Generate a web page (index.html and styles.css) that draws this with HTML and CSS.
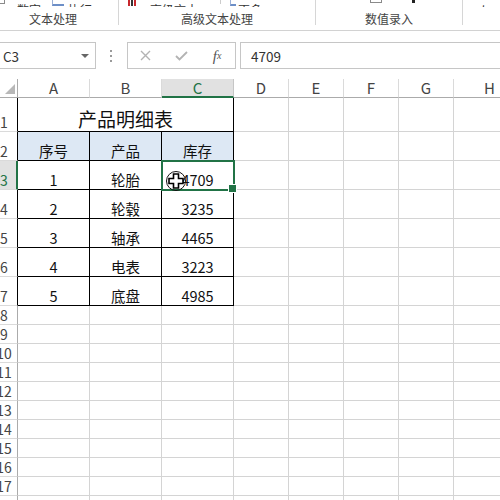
FILE: index.html
```html
<!DOCTYPE html>
<html lang="zh">
<head>
<meta charset="utf-8">
<link rel="stylesheet" href="styles.css">
</head>
<body>
<div class="ribbon">
  <div class="group g1">
    <div class="gtop">
      <span class="ico-box m7"></span>
      <span class="rt m12">数字</span>
      <span class="ico-blue m11"></span>
      <span class="rt m4">执行</span>
    </div>
    <div class="glabel">文本处理</div>
  </div>
  <div class="sep"></div>
  <div class="group g2">
    <div class="gtop">
      <span class="ico-bars m9"><i class="r"></i><i></i><i class="r"></i></span>
      <span class="rt m14">高级文本</span>
      <span class="minisep m22"></span>
      <span class="ico-blue small m9"></span>
      <span class="rt m2">更多</span>
    </div>
    <div class="glabel">高级文本处理</div>
  </div>
  <div class="sep"></div>
  <div class="group g3">
    <div class="gtop">
      <span class="ico-box wide m54"></span>
      <span class="ico-dot m30"></span>
    </div>
    <div class="glabel">数值录入</div>
  </div>
  <div class="sep"></div>
  <div class="group g4">
    <div class="gtop">
      <span class="rt big m17">如</span>
    </div>
  </div>
</div>

<div class="fbar">
  <div class="namebox"><span>C3</span><span class="dd"></span></div>
  <div class="dots"><i></i><i></i><i></i></div>
  <div class="fbtns">
    <span class="fb">
      <svg width="11" height="11" viewBox="0 0 11 11"><path d="M1 1L10 10M10 1L1 10" stroke="#b3b3b3" stroke-width="1.4" fill="none"/></svg>
    </span>
    <span class="fb">
      <svg width="13" height="10" viewBox="0 0 13 10"><path d="M1 5L4.5 8.5L12 1" stroke="#b3b3b3" stroke-width="1.8" fill="none"/></svg>
    </span>
    <span class="fb fx">f<sub>x</sub></span>
  </div>
  <div class="finput">4709</div>
</div>

<div class="sheet">
  <div class="corner"><svg width="10" height="10" viewBox="0 0 10 10"><path d="M10 0L10 10L0 10Z" fill="#b8b8b8"/></svg></div>
  <div class="ch">A</div>
  <div class="ch">B</div>
  <div class="ch csel">C</div>
  <div class="ch">D</div>
  <div class="ch">E</div>
  <div class="ch">F</div>
  <div class="ch">G</div>
  <div class="ch">H</div>

  <div class="rh rb">1</div>
  <div class="c t title">产品明细表</div>
  <div class="c"></div><div class="c"></div><div class="c"></div><div class="c"></div><div class="c"></div>

  <div class="rh rb">2</div>
  <div class="c t hd">序号</div><div class="c t hd">产品</div><div class="c t hd">库存</div>
  <div class="c"></div><div class="c"></div><div class="c"></div><div class="c"></div><div class="c"></div>

  <div class="rh rsel">3</div>
  <div class="c t">1</div><div class="c t">轮胎</div><div class="c t sel">4709</div>
  <div class="c"></div><div class="c"></div><div class="c"></div><div class="c"></div><div class="c"></div>

  <div class="rh rb">4</div>
  <div class="c t">2</div><div class="c t">轮毂</div><div class="c t">3235</div>
  <div class="c"></div><div class="c"></div><div class="c"></div><div class="c"></div><div class="c"></div>

  <div class="rh rb">5</div>
  <div class="c t">3</div><div class="c t">轴承</div><div class="c t">4465</div>
  <div class="c"></div><div class="c"></div><div class="c"></div><div class="c"></div><div class="c"></div>

  <div class="rh rb">6</div>
  <div class="c t">4</div><div class="c t">电表</div><div class="c t">3223</div>
  <div class="c"></div><div class="c"></div><div class="c"></div><div class="c"></div><div class="c"></div>

  <div class="rh rb">7</div>
  <div class="c t">5</div><div class="c t">底盘</div><div class="c t">4985</div>
  <div class="c"></div><div class="c"></div><div class="c"></div><div class="c"></div><div class="c"></div>

  <div class="rh">8</div><div class="c"></div><div class="c"></div><div class="c"></div><div class="c"></div><div class="c"></div><div class="c"></div><div class="c"></div><div class="c"></div>
  <div class="rh">9</div><div class="c"></div><div class="c"></div><div class="c"></div><div class="c"></div><div class="c"></div><div class="c"></div><div class="c"></div><div class="c"></div>
  <div class="rh">10</div><div class="c"></div><div class="c"></div><div class="c"></div><div class="c"></div><div class="c"></div><div class="c"></div><div class="c"></div><div class="c"></div>
  <div class="rh">11</div><div class="c"></div><div class="c"></div><div class="c"></div><div class="c"></div><div class="c"></div><div class="c"></div><div class="c"></div><div class="c"></div>
  <div class="rh">12</div><div class="c"></div><div class="c"></div><div class="c"></div><div class="c"></div><div class="c"></div><div class="c"></div><div class="c"></div><div class="c"></div>
  <div class="rh">13</div><div class="c"></div><div class="c"></div><div class="c"></div><div class="c"></div><div class="c"></div><div class="c"></div><div class="c"></div><div class="c"></div>
  <div class="rh">14</div><div class="c"></div><div class="c"></div><div class="c"></div><div class="c"></div><div class="c"></div><div class="c"></div><div class="c"></div><div class="c"></div>
  <div class="rh">15</div><div class="c"></div><div class="c"></div><div class="c"></div><div class="c"></div><div class="c"></div><div class="c"></div><div class="c"></div><div class="c"></div>
  <div class="rh">16</div><div class="c"></div><div class="c"></div><div class="c"></div><div class="c"></div><div class="c"></div><div class="c"></div><div class="c"></div><div class="c"></div>
  <div class="rh">17</div><div class="c"></div><div class="c"></div><div class="c"></div><div class="c"></div><div class="c"></div><div class="c"></div><div class="c"></div><div class="c"></div>
  <div class="rh">18</div><div class="c"></div><div class="c"></div><div class="c"></div><div class="c"></div><div class="c"></div><div class="c"></div><div class="c"></div><div class="c"></div>
</div>

<svg class="cursor" width="22" height="22" viewBox="0 0 22 22">
  <circle cx="11" cy="11" r="9.5" fill="none" stroke="#111" stroke-width="1"/>
  <path d="M8.5 4H13.5V8.5H18V13.5H13.5V18H8.5V13.5H4V8.5H8.5Z" fill="#fff" stroke="#000" stroke-width="1.6" stroke-linejoin="miter"/>
</svg>
</body>
</html>
```

FILE: styles.css
```css
* { box-sizing: border-box; }
html, body {
  margin: 0;
  padding: 0;
  width: 500px;
  height: 500px;
  overflow: hidden;
  background: #fff;
  font-family: "Noto Sans CJK SC", "Noto Sans", sans-serif;
  color: #222;
}

/* ribbon */
.ribbon {
  display: flex;
  height: 31px;
  border-bottom: 1px solid #d2d2d2;
  margin-left: -12px;
  width: 512px;
  overflow: hidden;
}
.group { display: flex; flex-direction: column; flex: none; }
.g1 { width: 130px; }
.g2 { width: 196px; }
.g3 { width: 146px; }
.g4 { flex: 1; }
.sep { width: 1px; height: 25px; background: #d6d6d6; flex: none; }
.gtop {
  height: 7px;
  overflow: hidden;
  display: flex;
  align-items: flex-end;
}
.gtop > * { flex: none; }
.rt {
  font-size: 12px;
  line-height: 14px;
  color: #333;
  margin-bottom: -10px;
}
.rt.big { font-size: 14px; margin-bottom: -11px; }
.glabel {
  font-size: 12px;
  line-height: 18px;
  padding-top: 3px;
  color: #444;
  text-align: center;
}
.m2 { margin-left: 2px; }
.m4 { margin-left: 4px; }
.m7 { margin-left: 7px; }
.m9 { margin-left: 9px; }
.m11 { margin-left: 11px; }
.m12 { margin-left: 12px; }
.m14 { margin-left: 14px; }
.m17 { margin-left: 17px; }
.m22 { margin-left: 22px; }
.m30 { margin-left: 30px; }
.m54 { margin-left: 54px; }
.ico-box {
  width: 10px; height: 10px;
  border: 1px solid #8a8a8a;
  margin-bottom: 3px;
}
.ico-box.wide { width: 12px; margin-bottom: 4px; }
.ico-blue {
  width: 12px; height: 8px;
  border-bottom: 2px solid #6d8fc7;
  border-left: 1px solid #9bb0d6;
  margin-bottom: 1px;
}
.ico-blue.small { width: 6px; }
.ico-bars { display: flex; gap: 1px; height: 8px; margin-bottom: 1px; }
.ico-bars i { display: block; width: 2px; height: 8px; background: #333; }
.ico-bars i.r { background: #c8282d; }
.minisep { width: 1px; height: 6px; background: #ccc; margin-bottom: 3px; }
.ico-dot { width: 3px; height: 3px; background: #222; margin-bottom: 4px; }

/* formula bar */
.fbar {
  display: flex;
  align-items: center;
  height: 27px;
  margin: 11px 0 10px 0;
}
.namebox {
  flex: none;
  width: 97px;
  height: 27px;
  margin-left: -1px;
  border: 1px solid #c6c6c6;
  display: flex;
  align-items: center;
  padding-left: 3px;
  font-size: 13.5px;
  color: #333;
}
.dd {
  margin-left: auto;
  margin-right: 6px;
  width: 0; height: 0;
  border-left: 4px solid transparent;
  border-right: 4px solid transparent;
  border-top: 4px solid #666;
}
.dots {
  flex: none;
  margin-left: 14px;
  width: 2px;
  display: flex;
  flex-direction: column;
  gap: 3px;
}
.dots i { display: block; width: 2px; height: 2px; background: #9a9a9a; }
.fbtns {
  flex: none;
  margin-left: 15px;
  width: 109px;
  height: 27px;
  border: 1px solid #c6c6c6;
  display: flex;
  align-items: center;
}
.fb {
  width: 36px;
  display: flex;
  justify-content: center;
  align-items: center;
}
.fx {
  font-family: "Liberation Serif", "DejaVu Serif", serif;
  font-style: italic;
  font-size: 15px;
  color: #555;
  line-height: 16px;
}
.fx sub { font-size: 10px; vertical-align: -1px; }
.finput {
  flex: 1;
  margin-left: 4px;
  height: 27px;
  border: 1px solid #c6c6c6;
  border-right: none;
  display: flex;
  align-items: center;
  padding-left: 10px;
  font-size: 13.5px;
  color: #333;
}

/* sheet */
.sheet {
  display: grid;
  margin-left: -9px;
  grid-template-columns: 27px 72px 72px 72px 55px 55px 55px 55px 72px;
  grid-template-rows: 19px 34px 29px 29px 29px 29px 29px 29px repeat(11, 19px);
  width: 520px;
}
.corner {
  border-right: 1px solid #ababab;
  border-bottom: 1px solid #ababab;
  display: flex;
  justify-content: flex-end;
  align-items: flex-end;
  padding: 0 2px 3px 0;
}
.ch {
  border-right: 1px solid #dadada;
  border-bottom: 1px solid #ababab;
  text-align: center;
  font-size: 15px;
  line-height: 18px;
  color: #444;
}
.ch.csel {
  background: #e1e1e1;
  color: #217346;
  border-bottom: 2px solid #217346;
  border-right-color: #c6c6c6;
}
.rh {
  border-right: 1px solid #ababab;
  border-bottom: 1px solid #dadada;
  display: flex;
  align-items: flex-end;
  justify-content: center;
  font-size: 14px;
  line-height: 17px;
  color: #444;
}
.rh.rb { border-right-color: #000; }
.rh.rsel {
  background: #e1e1e1;
  color: #217346;
  border-right: 2px solid #217346;
  padding-left: 1px;
}
.c {
  border-right: 1px solid #d4d4d4;
  border-bottom: 1px solid #d4d4d4;
}
.c.t {
  border-right-color: #000;
  border-bottom-color: #000;
  display: flex;
  align-items: flex-end;
  justify-content: center;
  font-size: 14.5px;
  line-height: 18px;
  color: #111;
}
.c.title {
  grid-column: span 3;
  font-size: 19px;
  line-height: 24px;
}
.c.hd { background: #dde8f4; }
.c.sel {
  position: relative;
  outline: 2px solid #217346;
  outline-offset: -1px;
  z-index: 1;
}
.c.sel::after {
  content: "";
  position: absolute;
  right: -4px;
  bottom: -4px;
  width: 7px;
  height: 7px;
  background: #217346;
  border: 1px solid #fff;
}

.cursor {
  position: absolute;
  left: 165px;
  top: 170px;
  z-index: 5;
}
```
